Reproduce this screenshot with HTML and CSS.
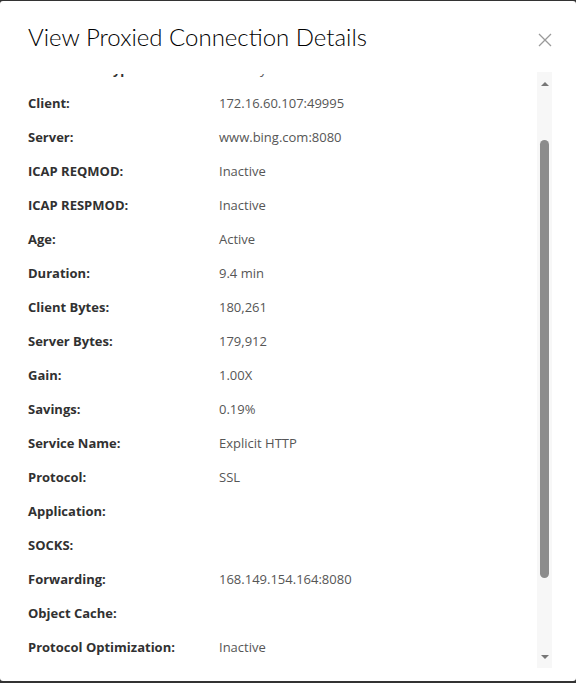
FILE: index.html
```html
<!DOCTYPE html>
<html>
<head>
<meta charset="utf-8">
<link rel="stylesheet" href="styles.css">
</head>
<body>
<div class="modal">
  <div class="modal-header">
    <h3 class="modal-title">View Proxied Connection Details</h3>
    <button class="close" aria-label="Close">
      <svg width="14" height="14" viewBox="0 0 14 14"><path d="M1 1 L13 13 M13 1 L1 13" stroke="#9a9a9a" stroke-width="1.3" fill="none"/></svg>
    </button>
  </div>
  <div class="modal-body">
    <div class="scroll-area" id="details">
      <div class="row"><span class="label">Connection ID:</span><span class="value">1187</span></div>
      <div class="row"><span class="label">Connection Type:</span><span class="value">Primary</span></div>
      <div class="row"><span class="label">Client:</span><span class="value">172.16.60.107:49995</span></div>
      <div class="row"><span class="label">Server:</span><span class="value">www.bing.com:8080</span></div>
      <div class="row"><span class="label">ICAP REQMOD:</span><span class="value">Inactive</span></div>
      <div class="row"><span class="label">ICAP RESPMOD:</span><span class="value">Inactive</span></div>
      <div class="row"><span class="label">Age:</span><span class="value">Active</span></div>
      <div class="row"><span class="label">Duration:</span><span class="value">9.4 min</span></div>
      <div class="row"><span class="label">Client Bytes:</span><span class="value">180,261</span></div>
      <div class="row"><span class="label">Server Bytes:</span><span class="value">179,912</span></div>
      <div class="row"><span class="label">Gain:</span><span class="value">1.00X</span></div>
      <div class="row"><span class="label">Savings:</span><span class="value">0.19%</span></div>
      <div class="row"><span class="label">Service Name:</span><span class="value">Explicit HTTP</span></div>
      <div class="row"><span class="label">Protocol:</span><span class="value">SSL</span></div>
      <div class="row"><span class="label">Application:</span><span class="value"></span></div>
      <div class="row"><span class="label">SOCKS:</span><span class="value"></span></div>
      <div class="row"><span class="label">Forwarding:</span><span class="value">168.149.154.164:8080</span></div>
      <div class="row"><span class="label">Object Cache:</span><span class="value"></span></div>
      <div class="row"><span class="label">Protocol Optimization:</span><span class="value">Inactive</span></div>
      <div class="row"><span class="label">Byte Caching:</span><span class="value">Inactive</span></div>
      <div class="row"><span class="label">Compression:</span><span class="value">Inactive</span></div>
      <div class="row"><span class="label">Bypass:</span><span class="value">No</span></div>
    </div>
    <div class="scrollbar">
      <div class="sb-button"><span class="arrow-up"></span></div>
      <div class="sb-track"><div class="sb-thumb" style="margin-top:51px;height:438px"></div></div>
      <div class="sb-button"><span class="arrow-down"></span></div>
    </div>
  </div>
</div>
<script src="script.js"></script>
</body>
</html>
```

FILE: styles.css
```css
html, body {
  margin: 0;
  padding: 0;
}
body {
  background: #333333;
  width: 576px;
  height: 683px;
  overflow: hidden;
  font-family: "Open Sans", "Noto Sans", sans-serif;
}
.modal {
  margin-top: 1px;
  height: 680px;
  background: #ffffff;
  border-radius: 3px;
  display: flex;
  flex-direction: column;
}
.modal-header {
  height: 71px;
  flex: none;
  display: flex;
  align-items: flex-start;
  justify-content: space-between;
  padding: 0 24px 0 28px;
  box-sizing: border-box;
}
.modal-title {
  margin: 22px 0 0 0;
  font-family: Lato, sans-serif;
  font-weight: 300;
  font-size: 24px;
  line-height: 28px;
  color: #000000;
}
.close {
  border: 0;
  background: none;
  padding: 0;
  margin: 32px 0 0 0;
  width: 14px;
  height: 14px;
  display: flex;
}
.modal-body {
  height: 596px;
  flex: none;
  margin-right: 24px;
  display: flex;
}
.scroll-area {
  flex: 1;
  margin-top: 2px;
  overflow: hidden;
  padding: 15px 0 15px 28px;
  box-sizing: border-box;
}
.scrollbar {
  width: 15px;
  flex: none;
  background: #f7f7f7;
  display: flex;
  flex-direction: column;
}
.sb-button {
  height: 17px;
  flex: none;
  display: flex;
  align-items: center;
  justify-content: center;
}
.arrow-up {
  width: 0;
  height: 0;
  border-left: 4px solid transparent;
  border-right: 4px solid transparent;
  border-bottom: 4px solid #777777;
  margin-top: 6px;
}
.arrow-down {
  width: 0;
  height: 0;
  border-left: 4px solid transparent;
  border-right: 4px solid transparent;
  border-top: 4px solid #777777;
  margin-bottom: 5px;
}
.sb-track {
  flex: 1;
  display: flex;
  flex-direction: column;
  align-items: center;
}
.sb-thumb {
  width: 9px;
  background: #8c8c8c;
  border-radius: 5px;
  flex: none;
}
.row {
  height: 34px;
  display: grid;
  grid-template-columns: 191px 1fr;
  align-items: center;
  font-size: 13px;
  line-height: 18px;
}
.label {
  font-weight: 700;
  color: #313131;
}
.value {
  color: #565656;
}
```

FILE: script.js
```js
document.getElementById('details').scrollTop = 71;
```
